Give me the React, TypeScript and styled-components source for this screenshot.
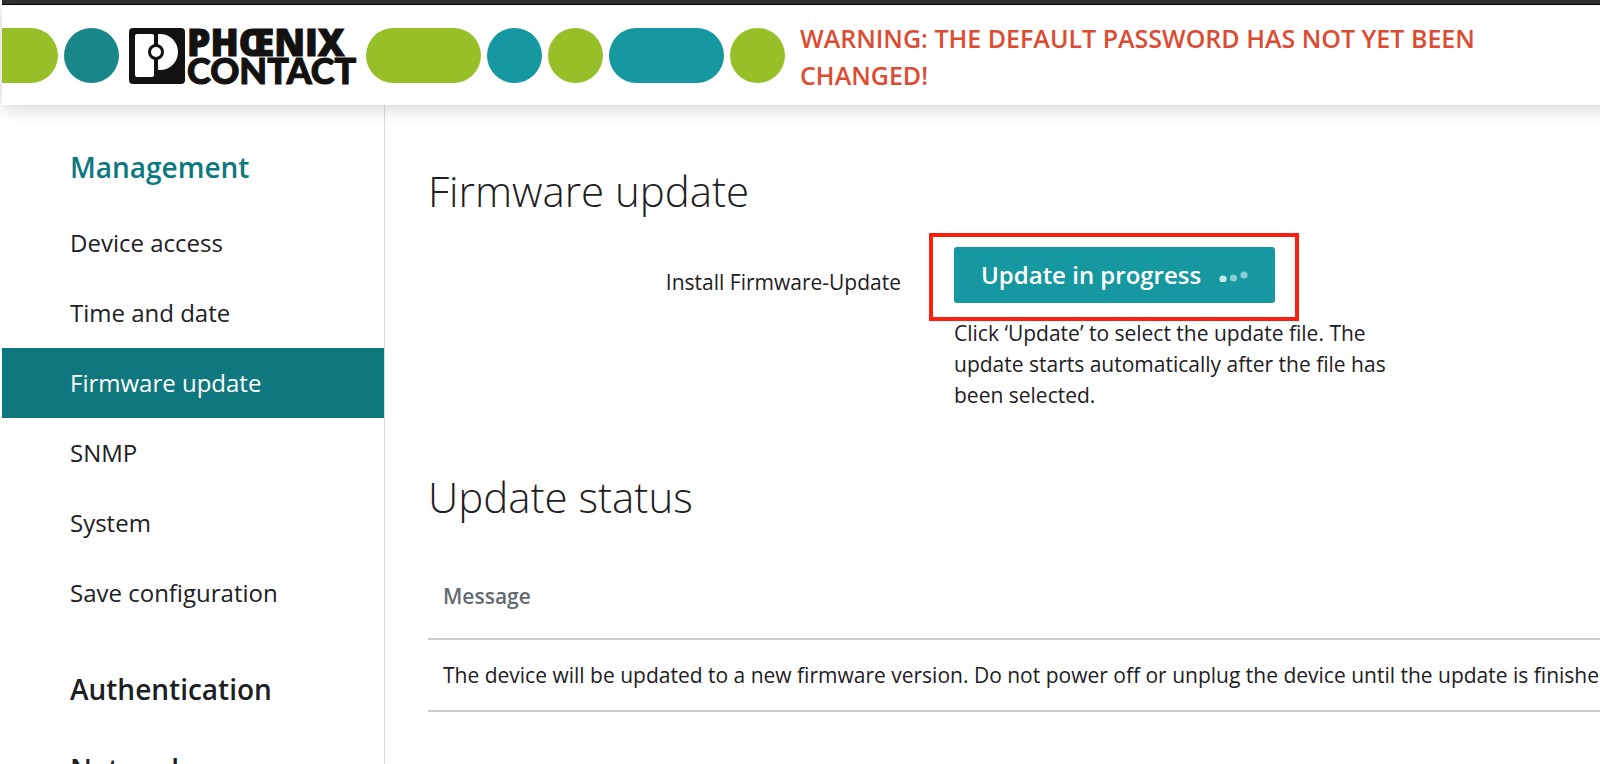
import React from "react";
import styled, { createGlobalStyle } from "styled-components";

const GlobalStyle = createGlobalStyle`
  * { box-sizing: border-box; }
  body {
    margin: 0;
    background: #fff;
    color: #1d2022;
    font-family: "Open Sans", "Noto Sans", sans-serif;
    font-size: 21px;
  }
`;

const Page = styled.div`
  display: flex;
  flex-direction: column;
  height: 100vh;
  padding-left: 2px;
  overflow: hidden;
`;

const TopStrip = styled.div`
  flex: none;
  height: 5px;
  background: #333;
  border-bottom: 1px solid #000;
`;

const Header = styled.header`
  flex: none;
  display: flex;
  align-items: center;
  gap: 6px;
  height: 100px;
  margin-right: -20px;
  padding: 1px 20px 0 0;
  background: #fff;
  box-shadow: 0 2px 18px rgba(0, 0, 0, 0.2);
  position: relative;
`;

const Pill = styled.span<{ $color: string; $wide?: boolean; $flush?: boolean }>`
  flex: none;
  width: ${(p) => (p.$wide ? 115 : p.$flush ? 56 : 55)}px;
  height: 55px;
  border-radius: ${(p) => (p.$flush ? "0 28px 28px 0" : "28px")};
  background: ${(p) => p.$color};
`;

const Brand = styled.a`
  flex: none;
  display: flex;
  align-items: center;
  gap: 2px;
  width: 235px;
  padding-left: 4px;
  color: #131211;
  text-decoration: none;
`;

const Wordmark = styled.span`
  display: flex;
  flex-direction: column;
  line-height: 29px;
  white-space: nowrap;
`;

const WordTop = styled.span`
  font-size: 37px;
  font-weight: 800;
  -webkit-text-stroke: 1px currentColor;
`;

const WordBottom = styled.span`
  font-family: Lato, "Open Sans", sans-serif;
  font-size: 36px;
  font-weight: 900;
  -webkit-text-stroke: 1px currentColor;
`;

const Warning = styled.p`
  width: 700px;
  margin: 0;
  padding: 2px 0 0 9px;
  color: #dc4c32;
  font-size: 25px;
  font-weight: 650;
  line-height: 37px;
`;

const Body = styled.div`
  flex: 1;
  display: flex;
  min-height: 0;
`;

const Sidebar = styled.nav`
  flex: none;
  width: 383px;
  padding-top: 42px;
  border-right: 1px solid #d8dbdd;
`;

const SectionLink = styled.a<{ $current?: boolean }>`
  display: block;
  padding: 0 68px;
  margin-bottom: 40px;
  color: ${(p) => (p.$current ? "#0c787f" : "#1d2022")};
  font-size: 28px;
  font-weight: 600;
  line-height: 40px;
  text-decoration: none;
`;

const NavList = styled.ul`
  margin: -19px 0 41px;
  padding: 0;
  list-style: none;
`;

const NavLink = styled.a<{ $active?: boolean }>`
  display: block;
  padding: 0 68px;
  background: ${(p) => (p.$active ? "#0f787f" : "transparent")};
  color: ${(p) => (p.$active ? "#fff" : "#1d2022")};
  font-size: 24px;
  line-height: 70px;
  text-decoration: none;
`;

const Main = styled.main`
  flex: 1;
  min-width: 0;
  padding: 56px 0 0 43px;
`;

const Title = styled.h1`
  margin: 0;
  font-size: 42px;
  font-weight: 300;
  line-height: 60px;
`;

const FormRow = styled.div`
  display: grid;
  grid-template-columns: 473px minmax(0, 440px);
  column-gap: 53px;
  padding-top: 26px;
  margin-bottom: 56px;
`;

const FieldLabel = styled.label`
  padding-top: 20px;
  line-height: 30px;
  text-align: right;
`;

const Field = styled.div`
  display: flex;
  flex-direction: column;
  align-items: flex-start;
`;

const Highlight = styled.div`
  position: relative;
  &::after {
    content: "";
    position: absolute;
    inset: -14px -24px -18px -25px;
    border: 4px solid #fc1f0f;
    pointer-events: none;
  }
`;

const UpdateButton = styled.button`
  display: flex;
  align-items: center;
  gap: 18px;
  height: 56px;
  padding: 0 27px;
  border: 0;
  border-radius: 3px;
  background: #1698a0;
  color: #fff;
  font: 600 24px/56px "Open Sans", sans-serif;
`;

const Hint = styled.p`
  margin: 15px 0 0;
  line-height: 31px;
`;

const StatusTable = styled.table`
  width: 100%;
  margin-top: 26px;
  border-collapse: collapse;
  text-align: left;
  white-space: nowrap;

  th,
  td {
    padding: 0 15px;
    border-bottom: 2px solid #c6cdcf;
  }
  th {
    height: 86px;
    color: #646b70;
    font-weight: 600;
  }
  td {
    height: 72px;
  }
`;

const LogoMark = () => (
  <svg width="56" height="56" viewBox="0 0 56 56" aria-hidden="true">
    <rect width="56" height="56" rx="4" fill="#131211" />
    <rect x="6" y="6" width="19" height="43" rx="2" fill="#fff" />
    <path d="M29 6h2a18 18 0 0 1 0 36h-2z" fill="#fff" />
    <circle cx="27" cy="24" r="8" fill="#131211" />
    <circle cx="27" cy="24" r="5" fill="#fff" />
  </svg>
);

const ProgressDots = () => (
  <svg width="29" height="14" viewBox="0 0 29 14" aria-hidden="true">
    <circle cx="4" cy="11" r="3.6" fill="#fff" fillOpacity=".78" />
    <circle cx="14.5" cy="10" r="3.6" fill="#fff" fillOpacity=".5" />
    <circle cx="25" cy="7" r="3.6" fill="#fff" fillOpacity=".5" />
  </svg>
);

const managementItems = [
  "Device access",
  "Time and date",
  "Firmware update",
  "SNMP",
  "System",
  "Save configuration",
];

const GREEN = "#97bf28";
const TEAL = "#1698a0";

export default function App() {
  return (
    <>
      <GlobalStyle />
      <Page>
        <TopStrip />
        <Header>
          <Pill $color={GREEN} $flush />
          <Pill $color="#19868a" />
          <Brand href="#home">
            <LogoMark />
            <Wordmark>
              <WordTop>PHŒNIX</WordTop>
              <WordBottom>CONTACT</WordBottom>
            </Wordmark>
          </Brand>
          <Pill $color={GREEN} $wide />
          <Pill $color={TEAL} />
          <Pill $color={GREEN} />
          <Pill $color={TEAL} $wide />
          <Pill $color={GREEN} />
          <Warning role="alert">
            WARNING: THE DEFAULT PASSWORD HAS NOT YET BEEN CHANGED!
          </Warning>
        </Header>
        <Body>
          <Sidebar>
            <SectionLink href="#management" $current>
              Management
            </SectionLink>
            <NavList>
              {managementItems.map((item) => (
                <li key={item}>
                  <NavLink href="#item" $active={item === "Firmware update"}>
                    {item}
                  </NavLink>
                </li>
              ))}
            </NavList>
            <SectionLink href="#authentication">Authentication</SectionLink>
            <SectionLink href="#network">Network</SectionLink>
          </Sidebar>
          <Main>
            <Title>Firmware update</Title>
            <FormRow>
              <FieldLabel htmlFor="update">Install Firmware-Update</FieldLabel>
              <Field>
                <Highlight>
                  <UpdateButton id="update" type="button">
                    Update in progress
                    <ProgressDots />
                  </UpdateButton>
                </Highlight>
                <Hint>
                  Click ‘Update’ to select the update file. The update starts
                  automatically after the file has been selected.
                </Hint>
              </Field>
            </FormRow>
            <Title as="h2">Update status</Title>
            <StatusTable>
              <thead>
                <tr>
                  <th scope="col">Message</th>
                </tr>
              </thead>
              <tbody>
                <tr>
                  <td>
                    The device will be updated to a new firmware version. Do not
                    power off or unplug the device until the update is finished.
                  </td>
                </tr>
              </tbody>
            </StatusTable>
          </Main>
        </Body>
      </Page>
    </>
  );
}
